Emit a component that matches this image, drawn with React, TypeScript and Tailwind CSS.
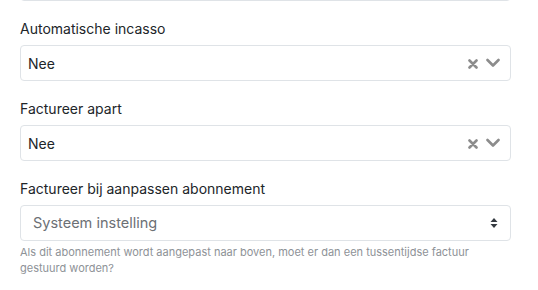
import { useState } from 'react';

const font = { fontFamily: 'Inter, "Noto Sans", sans-serif' };

function ClearableSelect({ label, value }: { label: string; value: string }) {
  return (
    <div className="mb-[19px]">
      <label className="block h-[20px] mb-[5px] text-[14px] leading-[17px] text-[#212529]">{label}</label>
      <div className="flex h-[36px] items-center rounded-[4px] border border-[#dfe3e7] bg-white pl-[7px] pr-[10px]">
        <span className="flex-1 text-[14px] text-[#212529]">{value}</span>
        <svg width="10" height="10" viewBox="0 0 10 10" className="mr-[8px] mt-[2px]">
          <path d="M1.5 1.5 L8.5 8.5 M8.5 1.5 L1.5 8.5" stroke="#8c8c8c" strokeWidth="2.6" strokeLinecap="round" />
        </svg>
        <svg width="14" height="10" viewBox="0 0 14 10">
          <path d="M1.5 2 L7 7.5 L12.5 2" fill="none" stroke="#8c8c8c" strokeWidth="2.6" strokeLinecap="round" strokeLinejoin="round" />
        </svg>
      </div>
    </div>
  );
}

export default function App() {
  const [mode, setMode] = useState('system');

  return (
    <div className="w-[538px] h-[290px] overflow-hidden bg-white" style={font}>
      <div className="w-[511px] pl-[20px]">
        <div className="-mt-[35px] h-[36px] rounded-[4px] border border-[#dfe3e7] mb-[19px]" />
        <ClearableSelect label="Automatische incasso" value="Nee" />
        <ClearableSelect label="Factureer apart" value="Nee" />
        <div>
          <label className="block h-[20px] mb-[5px] text-[14px] leading-[17px] text-[#212529]">
            Factureer bij aanpassen abonnement
          </label>
          <div className="relative h-[36px]">
            <select
              value={mode}
              onChange={(e) => setMode(e.target.value)}
              className="h-[36px] w-full appearance-none rounded-[4px] border border-[#dfe3e7] bg-white pl-[12px] text-[14.5px] text-[#6c7075] outline-none"
              style={font}
            >
              <option value="system">Systeem instelling</option>
              <option value="yes">Ja</option>
              <option value="no">Nee</option>
            </select>
            <svg width="8" height="12" viewBox="0 0 8 12" className="pointer-events-none absolute right-[13px] top-[12px]">
              <path d="M0.5 5 L4 1 L7.5 5 Z M0.5 7 L4 11 L7.5 7 Z" fill="#343a40" />
            </svg>
          </div>
          <p className="mt-[3px] text-[11px] leading-[16px] text-[#8e9297]">
            Als dit abonnement wordt aangepast naar boven, moet er dan een tussentijdse factuur gestuurd worden?
          </p>
        </div>
      </div>
    </div>
  );
}
